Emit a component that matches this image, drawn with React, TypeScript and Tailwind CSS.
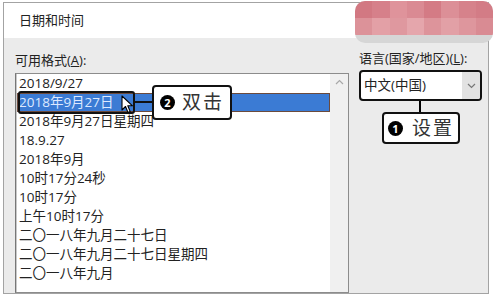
import React from 'react';

const FONT = { fontFamily: '"Open Sans", "Noto Sans CJK SC", sans-serif' };

const formats = [
  '2018/9/27',
  '2018年9月27日',
  '2018年9月27日星期四',
  '18.9.27',
  '2018年9月',
  '10时17分24秒',
  '10时17分',
  '上午10时17分',
  '二〇一八年九月二十七日',
  '二〇一八年九月二十七日星期四',
  '二〇一八年九月',
];

const mosaic = [
  ['#d27882', '#d6808a', '#df939b', '#da8a93', '#d47b85', '#dc8f97', '#d6828b', '#d37c86'],
  ['#dc9299', '#e3a0a6', '#df989f', '#e5a6ac', '#dd949b', '#e2a0a6', '#de969d', '#d98b93'],
];

const Badge: React.FC<{ n: string }> = ({ n }) => (
  <span className="flex h-[15px] w-[15px] items-center justify-center rounded-full bg-black text-[11px] font-bold leading-none text-white">
    {n}
  </span>
);

const Cursor = () => (
  <svg width="13" height="19" viewBox="0 0 13 19">
    <path d="M1 1 L1 15 L4.5 11.5 L7 17.5 L9.2 16.6 L6.8 10.8 L11.5 10.8 Z" fill="#fff" stroke="#000" strokeWidth="1.1" strokeLinejoin="round" />
  </svg>
);

export default function App() {
  return (
    <div className="relative h-[299px] w-[500px] overflow-hidden bg-white text-[#222]" style={FONT}>
      <div className="ml-[3px] mt-[2px] flex h-[292px] w-[486px] flex-col border border-[#a3a3a3] bg-[#ebebeb]">
        <div className="flex h-[35px] items-center bg-white pl-[15px] text-[13px]">日期和时间</div>

        <div className="flex min-h-0 flex-1">
          {/* left: formats list */}
          <div className="flex w-[345px] flex-col pl-[11px]">
            <div className="h-[35px] pt-[14px] text-[13px] leading-[16px]">
              可用格式(<span className="underline">A</span>):
            </div>
            <div className="flex min-h-0 flex-1 border border-[#8c8c8c] border-l-[#777] bg-white">
              <div className="flex-1 border-l border-[#c9c9c9]">
                {formats.map((f, i) =>
                  i === 1 ? (
                    <div
                      key={f}
                      className="flex h-[19px] items-center border border-[#6b4a3c] bg-[#3b7bd4] pl-[1px] text-[13.5px] text-[#dde9ff]"
                    >
                      {f}
                    </div>
                  ) : (
                    <div key={f} className="flex h-[19px] items-center pl-[2px] text-[13.5px]">
                      {f}
                    </div>
                  )
                )}
              </div>
              <div className="flex w-[18px] justify-center bg-[#f0f0f0] pt-[5px]">
                <svg width="9" height="6" viewBox="0 0 9 6">
                  <path d="M1 5 L4.5 1.5 L8 5" fill="none" stroke="#a8a8a8" strokeWidth="1.2" />
                </svg>
              </div>
            </div>
          </div>

          {/* right: language */}
          <div className="flex flex-1 flex-col pl-[10px] pt-[12px]">
            <div className="text-[13px] leading-[16px]">
              语言(国家/地区)(<span className="underline">L</span>):
            </div>
            <div className="mt-[4px] flex h-[31px] w-[123px] overflow-hidden rounded-[4px] border-2 border-[#111] bg-white">
              <div className="flex flex-1 items-center pl-[3px] text-[13.5px]">中文(中国)</div>
              <div className="flex w-[18px] items-center justify-center bg-[#e2e2e2]">
                <svg width="9" height="6" viewBox="0 0 9 6">
                  <path d="M1 1 L4.5 4.5 L8 1" fill="none" stroke="#777" strokeWidth="1.2" />
                </svg>
              </div>
            </div>
            <div className="ml-[60px] h-[11px] w-[2px] bg-black" />
            <div className="ml-[23px] flex h-[32px] w-[78px] items-center rounded-[4px] border-2 border-[#111] bg-white pl-[4px]">
              <Badge n="1" />
              <span className="ml-[9px] text-[19px] leading-none tracking-[2px] text-[#333]">设置</span>
            </div>
          </div>
        </div>
      </div>

      {/* annotation: double click */}
      <div className="absolute left-[18px] top-[91px] h-[23px] w-[117px] rounded-[3px] border-2 border-[#111]" />
      <div className="absolute left-[135px] top-[101px] h-[2px] w-[17px] bg-[#111]" />
      <div className="absolute left-[152px] top-[85px] flex h-[35px] w-[80px] items-center rounded-[4px] border-2 border-[#111] bg-white pl-[6px]">
        <Badge n="2" />
        <span className="ml-[7px] text-[19px] leading-none tracking-[2px] text-[#333]">双击</span>
      </div>
      <div className="absolute left-[121px] top-[95px]">
        <Cursor />
      </div>

      {/* blurred mosaic */}
      <div className="absolute left-[355px] top-[1px] flex h-[42px] w-[138px] flex-col overflow-hidden rounded-[10px] bg-[#d6d6d6]">
        {mosaic.map((row, r) => (
          <div key={r} className="flex h-[17px]">
            {row.map((c, i) => (
              <div key={i} className="h-full flex-1" style={{ backgroundColor: c }} />
            ))}
          </div>
        ))}
      </div>
    </div>
  );
}
